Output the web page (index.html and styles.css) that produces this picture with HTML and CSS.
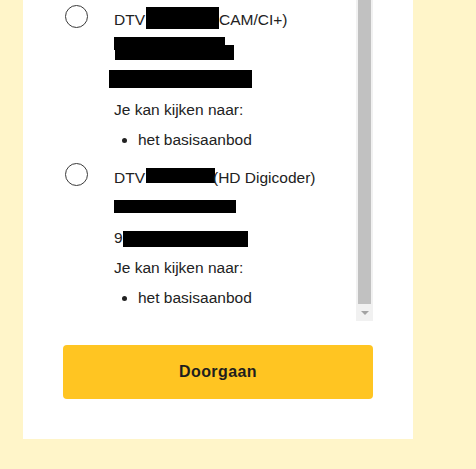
FILE: index.html
```html
<!DOCTYPE html>
<html lang="nl">
<head>
<meta charset="utf-8">
<title>Kies je toestel</title>
<link rel="stylesheet" href="styles.css">
</head>
<body>
<div class="card">
  <div class="scroll-area">
    <div class="options">
      <div class="option">
        <span class="radio"></span>
        <div class="details">
          <div class="line">DTV<span class="redact r1"></span>CAM/CI+)</div>
          <div class="line line-blocks">
            <div class="blk b1"></div>
            <div class="blk b2"></div>
          </div>
          <div class="line line-blocks">
            <div class="blk b3"></div>
          </div>
          <div class="line">Je kan kijken naar:</div>
          <ul class="features">
            <li>het basisaanbod</li>
          </ul>
        </div>
      </div>
      <div class="option">
        <span class="radio"></span>
        <div class="details">
          <div class="line">DTV<span class="redact r2"></span>(HD Digicoder)</div>
          <div class="line line-blocks">
            <div class="blk b4"></div>
          </div>
          <div class="line">9<span class="redact r3"></span></div>
          <div class="line">Je kan kijken naar:</div>
          <ul class="features">
            <li>het basisaanbod</li>
          </ul>
        </div>
      </div>
    </div>
    <div class="scrollbar">
      <div class="thumb"></div>
      <div class="arrow-btn"><span class="arrow"></span></div>
    </div>
  </div>
  <button class="continue" type="button">Doorgaan</button>
</div>
</body>
</html>
```

FILE: styles.css
```css
html, body {
  margin: 0;
  padding: 0;
}

body {
  background: #fff5c9;
  font-family: "Liberation Sans", Arial, sans-serif;
  color: #222222;
}

.card {
  margin-left: 23px;
  width: 310px;
  padding: 0 40px 40px 40px;
  background: #ffffff;
  display: flex;
  flex-direction: column;
  gap: 24px;
}

.scroll-area {
  display: flex;
  height: 321px;
}

.options {
  flex: 1;
  overflow: hidden;
  padding-top: 5px;
  display: flex;
  flex-direction: column;
  gap: 8px;
}

.option {
  display: flex;
  align-items: flex-start;
}

.radio {
  flex: none;
  width: 21px;
  height: 21px;
  margin-left: 2px;
  margin-right: 26px;
  border: 1.5px solid #3a3a3a;
  border-radius: 50%;
}

.details {
  font-size: 15.5px;
  line-height: 30px;
}

.line {
  height: 30px;
  white-space: nowrap;
}

.redact {
  display: inline-block;
  background: #000;
}

.r1 {
  width: 73px;
  height: 22px;
  margin-left: 1px;
  vertical-align: -4px;
}

.r2 {
  width: 69px;
  height: 15px;
  margin-left: 1px;
  margin-right: -2px;
  vertical-align: baseline;
}

.r3 {
  width: 125px;
  height: 16px;
  vertical-align: -4px;
}

.line-blocks {
  display: flex;
  flex-direction: column;
}

.blk {
  background: #000;
}

.b1 {
  width: 111px;
  height: 13px;
  margin-top: 2px;
}

.b2 {
  width: 119px;
  height: 15px;
  margin-top: -5px;
  margin-left: 1px;
}

.b3 {
  width: 143px;
  height: 18px;
  margin-top: 5px;
  margin-left: -5px;
}

.b4 {
  width: 122px;
  height: 13px;
  margin-top: 7px;
}

.features {
  margin: 0;
  padding-left: 24px;
}

.features li {
  height: 30px;
}

.scrollbar {
  flex: none;
  width: 17px;
  background: #f1f1f1;
  display: flex;
  flex-direction: column;
}

.thumb {
  flex: 1;
  margin: 0 2px;
  background: #c1c1c1;
}

.arrow-btn {
  height: 17px;
  display: flex;
  align-items: center;
  justify-content: center;
}

.arrow {
  width: 0;
  height: 0;
  border-left: 4px solid transparent;
  border-right: 4px solid transparent;
  border-top: 4px solid #a3a3a3;
}

.continue {
  width: 310px;
  height: 54px;
  border: none;
  border-radius: 4px;
  background: #ffc522;
  color: #1e1e1e;
  font-family: "Liberation Sans", Arial, sans-serif;
  font-weight: bold;
  font-size: 16px;
  letter-spacing: 0.4px;
  padding: 0;
}
```
